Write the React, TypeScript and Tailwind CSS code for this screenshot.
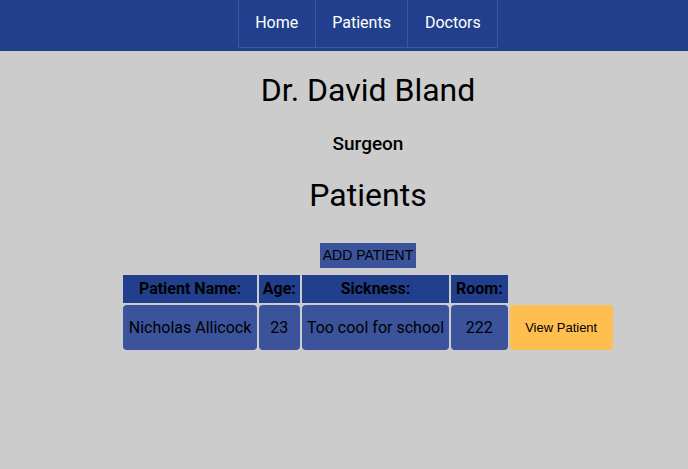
export default function App() {
  const navItems = ['Home', 'Patients', 'Doctors'];
  return (
    <div className="min-h-[469px] bg-[#cccccc] font-['Roboto',sans-serif] text-black">
      {/* Top nav */}
      <nav className="h-[51px] bg-[#213f8c] pl-12 flex justify-center">
        <ul className="flex h-[48px] border-b border-r border-[#3a57a5]">
          {navItems.map((item) => (
            <li
              key={item}
              className="flex items-center pb-[2px] px-[16.5px] border-l border-[#3a57a5] text-white text-[16px]"
            >
              {item}
            </li>
          ))}
        </ul>
      </nav>

      <main className="pl-12 flex flex-col items-center">
        <h1 className="mt-[21px] text-[32px] leading-[37px] font-normal">Dr. David Bland</h1>
        <h3 className="mt-[24px] text-[19px] leading-[22px] font-medium">Surgeon</h3>
        <h1 className="mt-[22px] text-[32px] leading-[37px] font-normal">Patients</h1>

        <button className="mt-[29px] h-[25px] px-[3px] bg-[#3a539b] text-[14px] font-['Liberation_Sans',sans-serif] text-black">
          ADD PATIENT
        </button>

        <table className="mt-[5px] border-separate border-spacing-[2px] text-[16px]">
          <thead>
            <tr>
              <th className="h-[28px] px-[6px] bg-[#213f8c] font-bold">Patient Name:</th>
              <th className="h-[28px] px-[4px] bg-[#213f8c] font-bold">Age:</th>
              <th className="h-[28px] px-[6px] bg-[#213f8c] font-bold">Sickness:</th>
              <th className="h-[28px] px-[5px] bg-[#213f8c] font-bold">Room:</th>
              <th></th>
            </tr>
          </thead>
          <tbody>
            <tr>
              <td className="h-[45px] px-[5.5px] bg-[#3a539b] rounded-[4px] text-center">Nicholas Allicock</td>
              <td className="h-[45px] px-[5px] bg-[#3a539b] rounded-[4px] text-center">23</td>
              <td className="h-[45px] px-[5px] bg-[#3a539b] rounded-[4px] text-center">Too cool for school</td>
              <td className="h-[45px] px-[5px] bg-[#3a539b] rounded-[4px] text-center">222</td>
              <td className="h-[45px] p-0">
                <button className="w-[103px] h-[45px] bg-[#ffbe50] rounded-[4px] text-[13px] font-['Liberation_Sans',sans-serif] text-black">
                  View Patient
                </button>
              </td>
            </tr>
          </tbody>
        </table>
      </main>
    </div>
  );
}
